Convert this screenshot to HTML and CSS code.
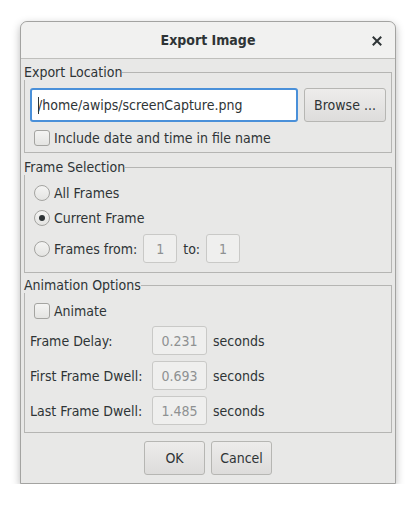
FILE: index.html
```html
<!DOCTYPE html>
<html>
<head>
<meta charset="utf-8">
<link rel="stylesheet" href="styles.css">
</head>
<body>
<div class="window">
  <div class="titlebar">
    <span class="title">Export Image</span>
    <span class="close">
      <svg width="10" height="10" viewBox="0 0 10 10"><path d="M1.5 1.5 L8.5 8.5 M8.5 1.5 L1.5 8.5" stroke="#2e3436" stroke-width="2" stroke-linecap="square"/></svg>
    </span>
  </div>
  <div class="content">
    <fieldset class="group g1">
      <legend>Export Location</legend>
      <div class="row loc">
        <div class="entry focused"><span class="caret"></span>/home/awips/screenCapture.png</div>
        <div class="btn browse">Browse ...</div>
      </div>
      <div class="check"><span class="cbox"></span>Include date and time in file name</div>
    </fieldset>
    <fieldset class="group g2">
      <legend>Frame Selection</legend>
      <div class="radio"><span class="rbox"></span>All Frames</div>
      <div class="radio"><span class="rbox on"></span>Current Frame</div>
      <div class="radio range"><span class="rbox"></span>Frames from:<span class="spin w34">1</span>to:<span class="spin w34">1</span></div>
    </fieldset>
    <fieldset class="group g3">
      <legend>Animation Options</legend>
      <div class="check anim"><span class="cbox"></span>Animate</div>
      <div class="grid">
        <span class="lbl">Frame Delay:</span><span class="spin num">0.231</span><span>seconds</span>
        <span class="lbl">First Frame Dwell:</span><span class="spin num">0.693</span><span>seconds</span>
        <span class="lbl">Last Frame Dwell:</span><span class="spin num">1.485</span><span>seconds</span>
      </div>
    </fieldset>
    <div class="actions">
      <div class="btn act">OK</div>
      <div class="btn act">Cancel</div>
    </div>
  </div>
</div>
</body>
</html>
```

FILE: styles.css
```css
html, body {
  margin: 0;
  padding: 0;
  background: #ffffff;
}
body {
  font-family: "DejaVu Sans Condensed", "DejaVu Sans", sans-serif;
  font-stretch: condensed;
  font-size: 14px;
  color: #2e3436;
  white-space: nowrap;
}
.window {
  margin: 21px 0 0 20px;
  width: 374px;
  border: 1px solid #a3a3a1;
  border-radius: 7px 7px 0 0;
  background: #e8e8e7;
  box-shadow: 0 3px 9px rgba(0,0,0,0.28);
}
.titlebar {
  height: 36px;
  border-bottom: 1px solid #bfbfbc;
  background: #f1f1f0;
  border-radius: 7px 7px 0 0;
  display: flex;
  align-items: center;
  justify-content: center;
  position: relative;
}
.title {
  font-weight: bold;
  font-size: 14px;
  color: #2e3436;
}
.close {
  position: absolute;
  right: 13px;
  top: 14px;
  width: 10px;
  height: 10px;
  display: flex;
}
.content {
  padding: 5px 3px 8px 3px;
}
.group {
  margin: 0;
  padding: 0 5px 5px 5px;
  border: 1px solid #b5b5b3;
  min-width: 0;
}
.g2 {
  margin-top: 6px;
}
.g3 {
  margin-top: 4px;
}
legend {
  padding: 0;
  margin-left: -6px;
  line-height: 16px;
  color: #2e3436;
}
.row {
  display: flex;
  gap: 6px;
}
.loc {
  margin-top: 8px;
}
.entry {
  flex: 1;
  height: 34px;
  box-sizing: border-box;
  border: 2px solid #4a90d9;
  border-radius: 3px;
  background: #ffffff;
  display: flex;
  align-items: center;
  padding-left: 6px;
}
.caret {
  width: 1px;
  height: 17px;
  background: #2e3436;
  margin-right: -1px;
}
.btn {
  box-sizing: border-box;
  border: 1px solid #b6b6b3;
  border-radius: 3px;
  background: linear-gradient(#edeceb, #dddcdb);
  display: flex;
  align-items: center;
  justify-content: center;
  color: #2e3436;
}
.browse {
  width: 82px;
  height: 34px;
}
.check, .radio {
  display: flex;
  align-items: center;
  padding-left: 4px;
}
.check {
  margin-top: 7px;
  height: 18px;
}
.cbox {
  width: 14px;
  height: 14px;
  border: 1px solid #a4a4a1;
  border-radius: 3px;
  background: linear-gradient(#f4f4f3, #e4e4e2);
  margin-right: 4px;
  flex: none;
}
.rbox {
  width: 14px;
  height: 14px;
  border: 1px solid #a4a4a1;
  border-radius: 50%;
  background: linear-gradient(#f4f4f3, #e4e4e2);
  margin-right: 4px;
  flex: none;
  display: flex;
  align-items: center;
  justify-content: center;
}
.rbox.on::after {
  content: "";
  width: 6px;
  height: 6px;
  border-radius: 50%;
  background: #2e3436;
}
.g2 {
  padding-bottom: 7px;
}
.g2 legend {
  margin-bottom: 5px;
}
.radio {
  height: 25px;
}
.range {
  height: 33px;
  margin-top: 2px;
}
.spin {
  box-sizing: border-box;
  height: 29px;
  border: 1px solid #c9c9c7;
  border-radius: 3px;
  background: #efefee;
  color: #8e9192;
  display: inline-flex;
  align-items: center;
  justify-content: center;
}
.w34 {
  width: 34px;
  margin: 0 6px;
}
.range .w34:first-of-type {
  margin-left: 5px;
}
.g3 {
  padding-bottom: 7px;
}
.g3 legend {
  margin-bottom: 3px;
}
.anim {
  margin-top: 6px;
}
.grid {
  display: grid;
  grid-template-columns: 116px 55px auto;
  column-gap: 6px;
  row-gap: 6px;
  align-items: center;
  margin-top: 6px;
}
.num {
  width: 55px;
}
.actions {
  display: flex;
  justify-content: center;
  gap: 6px;
  margin-top: 8px;
}
.act {
  width: 61px;
  height: 34px;
}
```
